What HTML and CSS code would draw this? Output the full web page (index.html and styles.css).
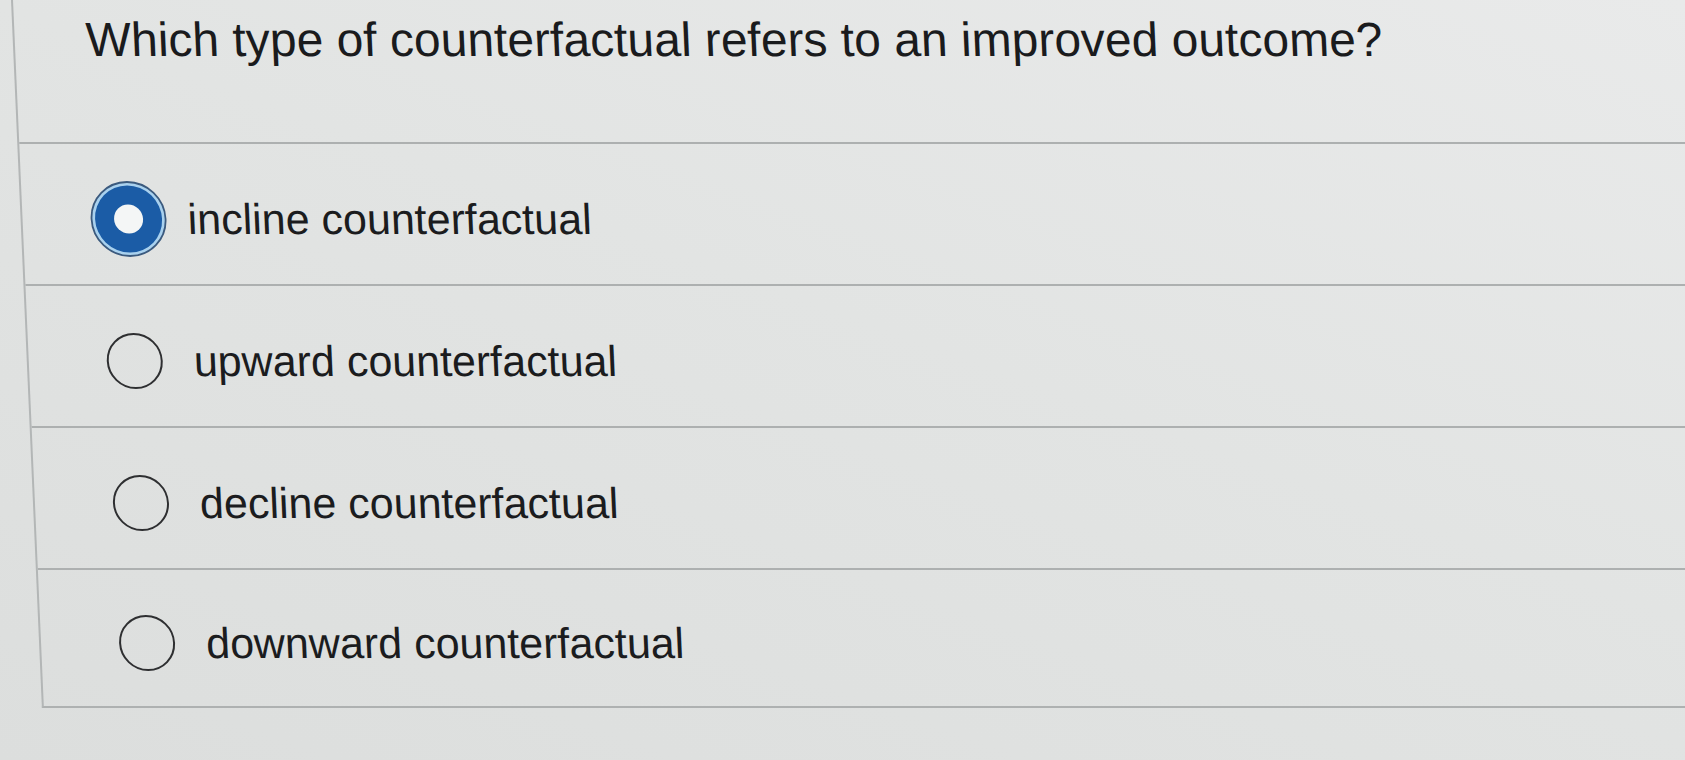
FILE: index.html
```html
<!DOCTYPE html>
<html lang="en">
<head>
<meta charset="utf-8">
<title>Question</title>
<link rel="stylesheet" href="styles.css">
</head>
<body>
<div class="panel">
  <h1 class="question">Which type of counterfactual refers to an improved outcome?</h1>
  <ul class="options">
    <li class="option">
      <span class="radio-slot">
        <svg class="radio-checked" width="78" height="78" viewBox="0 0 78 78" aria-hidden="true">
          <circle cx="39" cy="39" r="37" fill="#a9d1ee" stroke="#3b5a7e" stroke-width="1.8"/>
          <circle cx="39" cy="39" r="33.5" fill="#1b5ca6"/>
          <circle cx="39" cy="39" r="14.5" fill="#f4f6f6"/>
        </svg>
      </span>
      <span class="label">incline counterfactual</span>
    </li>
    <li class="option">
      <span class="radio-slot"><span class="radio"></span></span>
      <span class="label">upward counterfactual</span>
    </li>
    <li class="option">
      <span class="radio-slot"><span class="radio"></span></span>
      <span class="label">decline counterfactual</span>
    </li>
    <li class="option option-last">
      <span class="radio-slot"><span class="radio"></span></span>
      <span class="label">downward counterfactual</span>
    </li>
  </ul>
</div>
</body>
</html>
```

FILE: styles.css
```css
html, body {
  margin: 0;
  padding: 0;
}

body {
  width: 1685px;
  height: 760px;
  overflow: hidden;
  background: linear-gradient(200deg, #e9eaea 0%, #e2e4e3 45%, #dcdedd 100%);
  font-family: "Liberation Sans", Arial, Helvetica, sans-serif;
  color: #1b1c1e;
}

/* the photographed screen is seen at a slight angle */
.panel {
  margin-left: 11px;
  border-left: 2px solid #b3b6b6;
  border-bottom: 2px solid #aeb1b1;
  width: 1720px;
  transform: skewX(2.5deg);
  transform-origin: 0 0;
}

.question {
  margin: 0;
  padding: 12px 0 0 71px;
  height: 142px;
  box-sizing: border-box;
  font-size: 48px;
  line-height: 55px;
  font-weight: normal;
  color: #1a1b1d;
}

.options {
  list-style: none;
  margin: 0;
  padding: 0;
}

.option {
  display: flex;
  align-items: center;
  box-sizing: border-box;
  height: 142px;
  padding: 10px 0 0 69px;
  border-top: 2px solid #adb0b0;
}

.option-last {
  height: 138px;
}

.radio-slot {
  width: 74px;
  height: 78px;
  display: flex;
  align-items: center;
  justify-content: center;
  flex: none;
}

.radio-checked {
  display: block;
  flex: none;
}

.radio {
  display: block;
  width: 56px;
  height: 56px;
  box-sizing: border-box;
  border: 2.5px solid #2e2f31;
  border-radius: 50%;
}

.label {
  margin-left: 22px;
  font-size: 43px;
  line-height: 50px;
  color: #1b1c1e;
  white-space: nowrap;
}
```
